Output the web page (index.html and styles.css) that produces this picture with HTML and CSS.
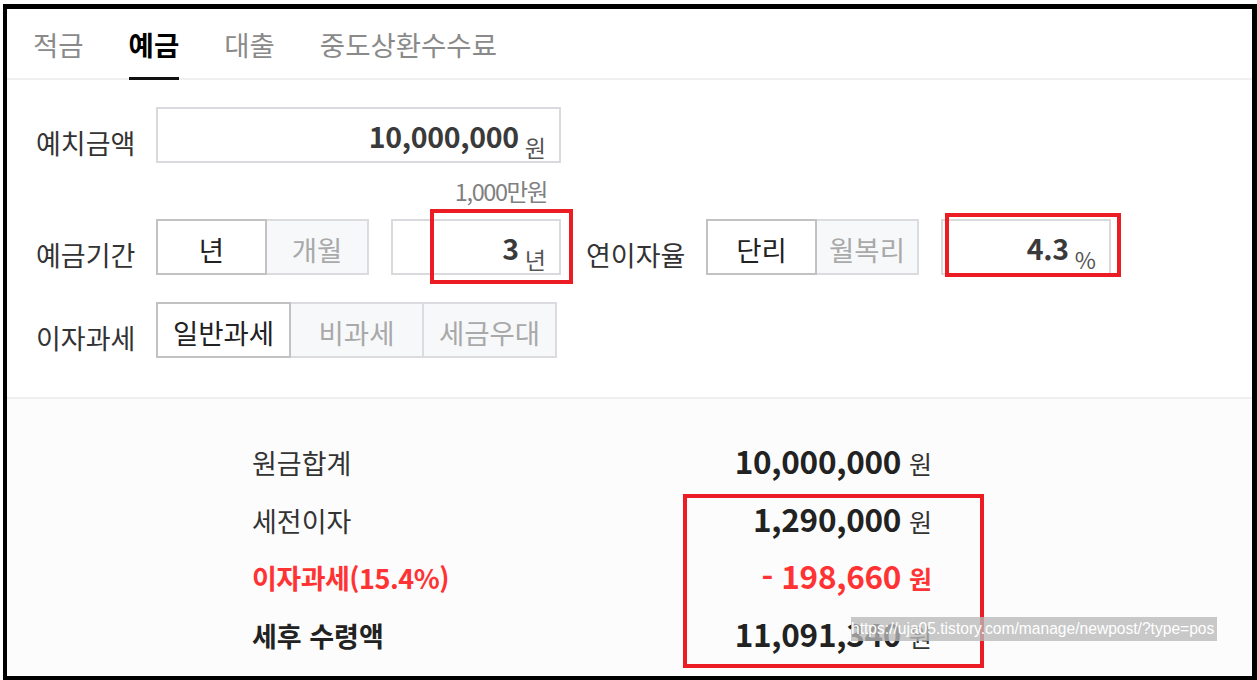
FILE: index.html
```html
<!DOCTYPE html>
<html lang="ko">
<head>
<meta charset="utf-8">
<title>예금 계산기</title>
<link rel="stylesheet" href="styles.css">
</head>
<body>
<div class="frame">
  <nav class="tabs">
    <span class="tab">적금</span>
    <span class="tab active">예금</span>
    <span class="tab">대출</span>
    <span class="tab">중도상환수수료</span>
  </nav>

  <section class="form">
    <div class="row">
      <span class="label">예치금액</span>
      <div class="field field-amount"><span class="num">10,000,000</span><span class="unit">원</span></div>
    </div>
    <div class="hint-row"><span class="hint">1,000만원</span></div>
    <div class="row">
      <span class="label">예금기간</span>
      <div class="seg seg-gap">
        <span class="opt on w-a">년</span><span class="opt w-b">개월</span>
      </div>
      <div class="field field-small field-period"><span class="num">3</span><span class="unit">년</span></div>
      <span class="label label-inline">연이자율</span>
      <div class="seg seg-gap">
        <span class="opt on w-a">단리</span><span class="opt w-b">월복리</span>
      </div>
      <div class="field field-small"><span class="num">4.3</span><span class="unit">%</span></div>
    </div>
    <div class="row row-tax">
      <span class="label">이자과세</span>
      <div class="seg">
        <span class="opt on w-c">일반과세</span><span class="opt w-c">비과세</span><span class="opt w-c">세금우대</span>
      </div>
    </div>
  </section>

  <section class="result">
    <div class="res-row">
      <span class="res-label">원금합계</span>
      <span class="res-value">10,000,000</span><span class="res-unit">원</span>
    </div>
    <div class="res-row">
      <span class="res-label">세전이자</span>
      <span class="res-value">1,290,000</span><span class="res-unit">원</span>
    </div>
    <div class="res-row red">
      <span class="res-label semi">이자과세(15.4%)</span>
      <span class="res-value">- 198,660</span><span class="res-unit strong">원</span>
    </div>
    <div class="res-row">
      <span class="res-label strong">세후 수령액</span>
      <span class="res-value">11,091,340</span><span class="res-unit">원</span>
    </div>
  </section>

  <div class="mark mark-period"></div>
  <div class="mark mark-rate"></div>
  <div class="mark mark-result"></div>
  <div class="url-tip">https://uja05.tistory.com/manage/newpost/?type=pos</div>
</div>
</body>
</html>
```

FILE: styles.css
```css
* { box-sizing: border-box; }
html, body { margin: 0; padding: 0; background: #fff; }
body {
  font-family: "Noto Sans CJK KR", "Noto Sans", sans-serif;
  color: #333;
  overflow: hidden;
}
.frame {
  position: relative;
  margin: 4px 0 0 3px;
  width: 1254px;
  height: 676px;
  border-style: solid;
  border-color: #000;
  border-width: 5px 5px 4px 4px;
  background: #fff;
  overflow: hidden;
}

/* tabs */
.tabs {
  display: flex;
  height: 71px;
  padding-left: 26px;
  border-bottom: 2px solid #f0f0f0;
}
.tab {
  font-size: 27.5px;
  line-height: 66px;
  padding-top: 2px;
  color: #8a8a8a;
  margin-right: 45px;
  border-bottom: 3px solid transparent;
  margin-bottom: -2px;
}
.tab.active {
  color: #000;
  font-weight: 700;
  border-bottom-color: #111;
}

/* form */
.form {
  padding: 27px 0 39px 29px;
  height: 317px;
}
.row {
  display: flex;
  align-items: center;
  height: 56px;
}
.row-tax { margin-top: 27px; }
.label {
  width: 120px;
  font-size: 27px;
  color: #333;
  padding-top: 14px;
  flex: none;
  white-space: nowrap;
}
.field {
  display: flex;
  justify-content: flex-end;
  align-items: center;
  height: 56px;
  border: 2px solid #dadade;
  background: #fff;
  padding-right: 13px;
  flex: none;
}
.field-amount { width: 405px; }
.field-small { width: 170px; }
.field-period { margin-right: 25px; }
.num {
  font-size: 28.5px;
  font-weight: 700;
  color: #3a3a3a;
  letter-spacing: -0.3px;
}
.unit {
  font-size: 23px;
  color: #555;
  margin-left: 6px;
  margin-top: 24px;
  line-height: 1;
}
.hint-row {
  height: 56px;
  width: 532px;
  display: flex;
  justify-content: flex-end;
  align-items: center;
  padding-right: 21px;
}
.hint {
  font-size: 23.5px;
  color: #808080;
  letter-spacing: -1.4px;
}

.seg { display: flex; flex: none; height: 56px; }
.seg-gap { margin-right: 22px; }
.opt {
  display: flex;
  align-items: center;
  justify-content: center;
  height: 56px;
  font-size: 27.5px;
  padding-top: 4px;
  color: #a9a9a9;
  background: #f7f8fa;
  border: 2px solid #dcdce0;
  white-space: nowrap;
}
.opt + .opt { margin-left: -2px; }
.opt.on {
  color: #222;
  background: #fff;
  border-color: #c2c2c2;
  position: relative;
  z-index: 1;
}
.w-a { width: 111px; }
.w-b { width: 104px; }
.w-c { width: 135px; }

/* result */
.result {
  height: 278px;
  background: #fcfcfc;
  border-top: 2px solid #efefef;
  padding: 33px 0 0 245px;
}
.res-row {
  display: flex;
  align-items: baseline;
  height: 57.5px;
  line-height: 57.5px;
}
.res-label {
  width: 400px;
  font-size: 27px;
  color: #333;
  white-space: nowrap;
}
.res-label.strong { font-weight: 700; color: #222; }
.res-label.semi { font-weight: 700; letter-spacing: -0.5px; }
.res-value {
  width: 249px;
  text-align: right;
  font-size: 31.5px;
  font-weight: 700;
  color: #222;
  letter-spacing: -0.3px;
  white-space: nowrap;
}
.res-unit {
  font-size: 25px;
  margin-left: 8px;
  color: #333;
}
.res-unit.strong { font-weight: 700; }
.res-row.red .res-label,
.res-row.red .res-value,
.res-row.red .res-unit { color: #ff3333; }

/* annotation overlays */
.mark {
  position: absolute;
  border: 4px solid #ec1c24;
  z-index: 5;
}
.mark-period { left: 423px; top: 200px; width: 143px; height: 75px; }
.mark-rate { left: 938px; top: 204px; width: 176px; height: 64px; }
.mark-result { left: 676px; top: 485px; width: 301px; height: 174px; }

.url-tip {
  position: absolute;
  left: 844px;
  top: 608px;
  width: 366px;
  height: 24px;
  line-height: 24px;
  background: rgba(185, 185, 185, 0.78);
  color: #fff;
  font-family: "Liberation Sans", Arial, sans-serif;
  font-size: 15.6px;
  white-space: nowrap;
  overflow: hidden;
  z-index: 6;
}
```
